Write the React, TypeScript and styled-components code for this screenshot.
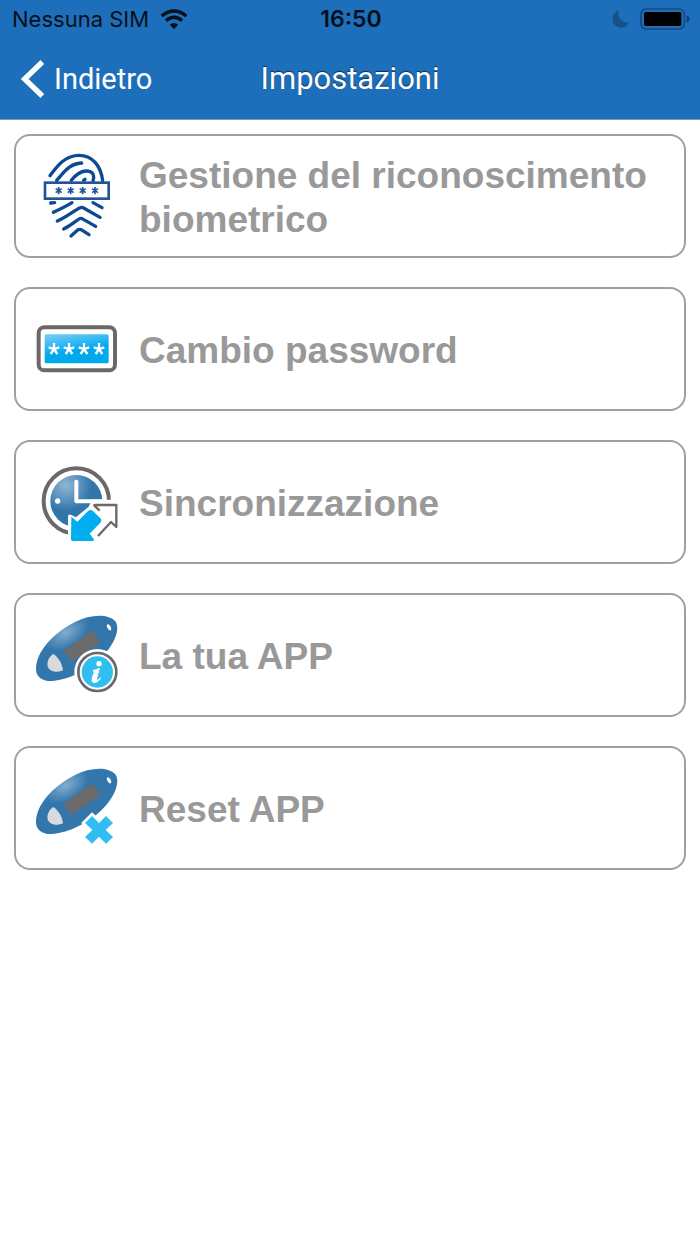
import React from 'react';
import styled, { createGlobalStyle } from 'styled-components';

const GlobalStyle = createGlobalStyle`
  *, *::before, *::after { box-sizing: border-box; }
  body { margin: 0; background: #ffffff; font-family: "Liberation Sans", Arial, sans-serif; }
`;

const Screen = styled.div`
  display: flex;
  flex-direction: column;
  min-height: 100vh;
  background: #ffffff;
`;

const Header = styled.header`
  background: #1e6fbb;
  border-bottom: 1px solid #6f9cc8;
`;

const StatusBar = styled.div`
  display: grid;
  grid-template-columns: 1fr auto 1fr;
  align-items: center;
  height: 38px;
  padding: 0 10px 0 12px;
  color: #06101b;
  font: 400 22px/28px Inter, sans-serif;
`;

const Carrier = styled.div`
  display: flex;
  align-items: center;
  gap: 11px;
`;

const Clock = styled.time`
  font-size: 23px;
  font-weight: 600;
`;

const Indicators = styled.div`
  display: flex;
  justify-content: flex-end;
  align-items: center;
  gap: 10px;
`;

const NavBar = styled.nav`
  display: grid;
  grid-template-columns: 1fr auto 1fr;
  align-items: center;
  height: 81px;
  padding: 0 20px;
  color: #ffffff;
`;

const BackButton = styled.button`
  display: flex;
  align-items: center;
  justify-self: start;
  gap: 9px;
  padding: 0;
  border: 0;
  background: none;
  color: inherit;
  font: 400 29px/36px Roboto, sans-serif;
  cursor: pointer;
`;

const Title = styled.h1`
  margin: 0;
  font: 400 31px/36px Roboto, sans-serif;
  text-shadow: 0 -1px 1px rgba(0, 0, 0, 0.6);
`;

const Menu = styled.main`
  display: flex;
  flex-direction: column;
  gap: 29px;
  padding: 14px;
`;

const MenuItem = styled.button`
  display: flex;
  align-items: center;
  gap: 20px;
  width: 100%;
  min-height: 124px;
  padding: 0 19px;
  border: 2px solid #a0a0a0;
  border-radius: 16px;
  background: #ffffff;
  color: #999999;
  font: 700 37px/44px "Liberation Sans", Arial, sans-serif;
  text-align: left;
  cursor: pointer;
`;

const Label = styled.span`
  padding-top: 4px;
`;

const IconFrame = styled.svg`
  flex: none;
  width: 84px;
  height: 90px;
`;

const WifiIcon = () => (
  <svg width="28" height="20" viewBox="0 0 84 60" aria-hidden="true">
    <g fill="none" stroke="#06101b" strokeWidth="10">
      <path d="M5 21Q42-9 79 21" />
      <path d="M18 35Q42 15 66 35" />
    </g>
    <path d="M29 47Q42 37 55 47L42 60Z" fill="#06101b" />
  </svg>
);

const MoonIcon = () => (
  <svg width="18" height="18" viewBox="0 0 54 54" aria-hidden="true">
    <path d="M20 1C14 20 29 42 52 37C47 48 38 53 28 53C13 53 2 42 2 27C2 14 9 5 20 1Z" fill="#16518a" />
  </svg>
);

const BatteryIcon = () => (
  <svg width="50" height="22" viewBox="0 0 150 66" aria-hidden="true">
    <rect x="3" y="3" width="130" height="60" rx="16" fill="none" stroke="#134a80" strokeWidth="5" />
    <rect x="12" y="12" width="112" height="42" rx="5" fill="#000" />
    <path d="M140 22Q149 26 149 33T140 44Z" fill="#123f6c" />
  </svg>
);

const BackIcon = () => (
  <svg width="25" height="38" viewBox="0 0 75 114" aria-hidden="true">
    <path d="M67 6L14 57L67 108" fill="none" stroke="#fff" strokeWidth="16" />
  </svg>
);

const star = 'M0-11V11M-9-6L9 6M9-6L-9 6';

const FingerprintIcon = () => (
  <IconFrame viewBox="75 63 252 270" aria-hidden="true">
    <g fill="none" stroke="#0c4a94" strokeWidth="10" strokeLinecap="round" strokeLinejoin="round">
      <path d="M120 137C142 108 165 76 207 76C250 76 273 111 278 152" />
      <path d="M140 151C162 127 177 101 215 99" />
      <path d="M184 151C200 131 219 120 238 124C252 128 253 141 249 152" />
      <path d="M221 151L225 148" />
      <path d="M122 219L134 218" />
      <path d="M130 247C152 237 170 228 186 218" />
      <path d="M249 218L276 233" />
      <path d="M142 273C172 260 190 243 209 234Q214 230 221 234L270 262" />
      <path d="M161 297C180 288 194 276 207 267Q213 263 220 268L257 289" />
      <path d="M183 318L203 300Q210 296 217 301L237 314" />
    </g>
    <rect x="105" y="158" width="191" height="48" fill="#fff" stroke="#23549a" strokeWidth="8" />
    <g stroke="#23549a" strokeWidth="5">
      {[146, 182, 218, 255].map((x) => (
        <path key={x} d={star} transform={`translate(${x} 182)`} />
      ))}
    </g>
  </IconFrame>
);

const PasswordIcon = () => (
  <IconFrame viewBox="75 57 252 270" aria-hidden="true">
    <defs>
      <linearGradient id="field" x1="0" y1="0" x2="0.35" y2="1">
        <stop offset="0" stopColor="#7bcdf5" />
        <stop offset="0.55" stopColor="#15b0f0" />
        <stop offset="0.65" stopColor="#00a9ec" />
      </linearGradient>
    </defs>
    <rect x="86" y="127" width="229" height="129" rx="17" fill="#fff" stroke="#6c6869" strokeWidth="12" />
    <rect x="104" y="148" width="192" height="87" rx="5" fill="url(#field)" />
    <g fill="none" stroke="#fff" strokeWidth="7">
      {[132, 177, 222, 267].map((x) => (
        <path key={x} d="M0-18V0M-16-5L0 0L16-5M-10 15L0 0L10 15" transform={`translate(${x} 192)`} />
      ))}
    </g>
  </IconFrame>
);

const SyncIcon = () => (
  <IconFrame viewBox="75 57 252 270" aria-hidden="true">
    <defs>
      <radialGradient id="dial" cx="0.3" cy="0.2" r="0.5">
        <stop offset="0" stopColor="#8fb6d5" />
        <stop offset="1" stopColor="#3275ab" />
      </radialGradient>
    </defs>
    <circle cx="199" cy="189" r="98" fill="#fff" stroke="#6c6869" strokeWidth="12" />
    <circle cx="199" cy="189" r="78" fill="url(#dial)" />
    <path d="M199 131V190H280" fill="none" stroke="#fff" strokeWidth="12" strokeLinecap="round" strokeLinejoin="round" />
    <circle cx="143" cy="189" r="8" fill="#fff" />
    <path d="M174 236Q174 227 184 231L198 238L236 206L246 185H330V310H174Z" fill="#fff" />
    <path d="M184 236L202 251L235 218Q242 213 249 219L271 241Q277 247 271 254L239 287L253 306L249 309H187Q183 309 183 304Z" fill="#00adef" />
    <path d="M269 218L253 203Q252 201 256 201H319V267L303 252L264 294" fill="none" stroke="#6c6869" strokeWidth="7" strokeLinejoin="round" />
  </IconFrame>
);

const TokenShape = ({ id }: { id: string }) => (
  <>
    <defs>
      <radialGradient id={id} gradientUnits="userSpaceOnUse" cx="167" cy="128" r="75" gradientTransform="rotate(-30 167 128) translate(0 51) scale(1 .6)">
        <stop offset="0" stopColor="#82adcf" />
        <stop offset="1" stopColor="#3276ac" />
      </radialGradient>
    </defs>
    <path
      d="M78 239C77 187 128 130 195 96C243 72 295 71 316 94C333 119 311 166 275 201C235 240 177 269 128 273C98 275 79 261 78 239Z"
      fill={`url(#${id})`}
    />
    <path d="M160 182L246 124Q249 123 252 127L271 157L184 216Z" fill="#6d6a6c" />
    <path d="M130 192C117 200 110 215 113 229C117 245 139 250 159 241C156 219 145 202 130 192Z" fill="#d9dadd" />
    <ellipse cx="297" cy="112" rx="5" ry="10" transform="rotate(-28 297 112)" fill="#fff" />
  </>
);

const AppInfoIcon = () => (
  <IconFrame viewBox="75 60 252 270" aria-hidden="true">
    <TokenShape id="token-info" />
    <circle cx="262" cy="246" r="69" fill="#fff" />
    <circle cx="262" cy="246" r="57" fill="#fff" stroke="#6c6869" strokeWidth="8" />
    <circle cx="262" cy="246" r="47" fill="#30bdf2" />
    <circle cx="267" cy="221" r="8" fill="#fff" />
    <path d="M249 242Q260 239 268 235L259 268Q258 275 272 264Q263 279 251 278Q243 276 247 264L253 246Z" fill="#fff" stroke="#fff" strokeWidth="3" strokeLinejoin="round" />
  </IconFrame>
);

const AppResetIcon = () => (
  <IconFrame viewBox="75 60 252 270" aria-hidden="true">
    <TokenShape id="token-reset" />
    <path
      d="M246 219L267 240L288 219L309 240L287 261L309 282L288 302L267 281L246 302L225 282L247 261L225 240Z"
      fill="#30bdf2"
      stroke="#fff"
      strokeWidth="16"
      paintOrder="stroke"
    />
  </IconFrame>
);

const items = [
  { label: 'Gestione del riconoscimento biometrico', Icon: FingerprintIcon },
  { label: 'Cambio password', Icon: PasswordIcon },
  { label: 'Sincronizzazione', Icon: SyncIcon },
  { label: 'La tua APP', Icon: AppInfoIcon },
  { label: 'Reset APP', Icon: AppResetIcon },
];

export default function App() {
  return (
    <Screen>
      <GlobalStyle />
      <Header>
        <StatusBar>
          <Carrier>
            <span>Nessuna SIM</span>
            <WifiIcon />
          </Carrier>
          <Clock>16:50</Clock>
          <Indicators>
            <MoonIcon />
            <BatteryIcon />
          </Indicators>
        </StatusBar>
        <NavBar>
          <BackButton type="button">
            <BackIcon />
            Indietro
          </BackButton>
          <Title>Impostazioni</Title>
        </NavBar>
      </Header>
      <Menu>
        {items.map(({ label, Icon }) => (
          <MenuItem key={label} type="button">
            <Icon />
            <Label>{label}</Label>
          </MenuItem>
        ))}
      </Menu>
    </Screen>
  );
}
